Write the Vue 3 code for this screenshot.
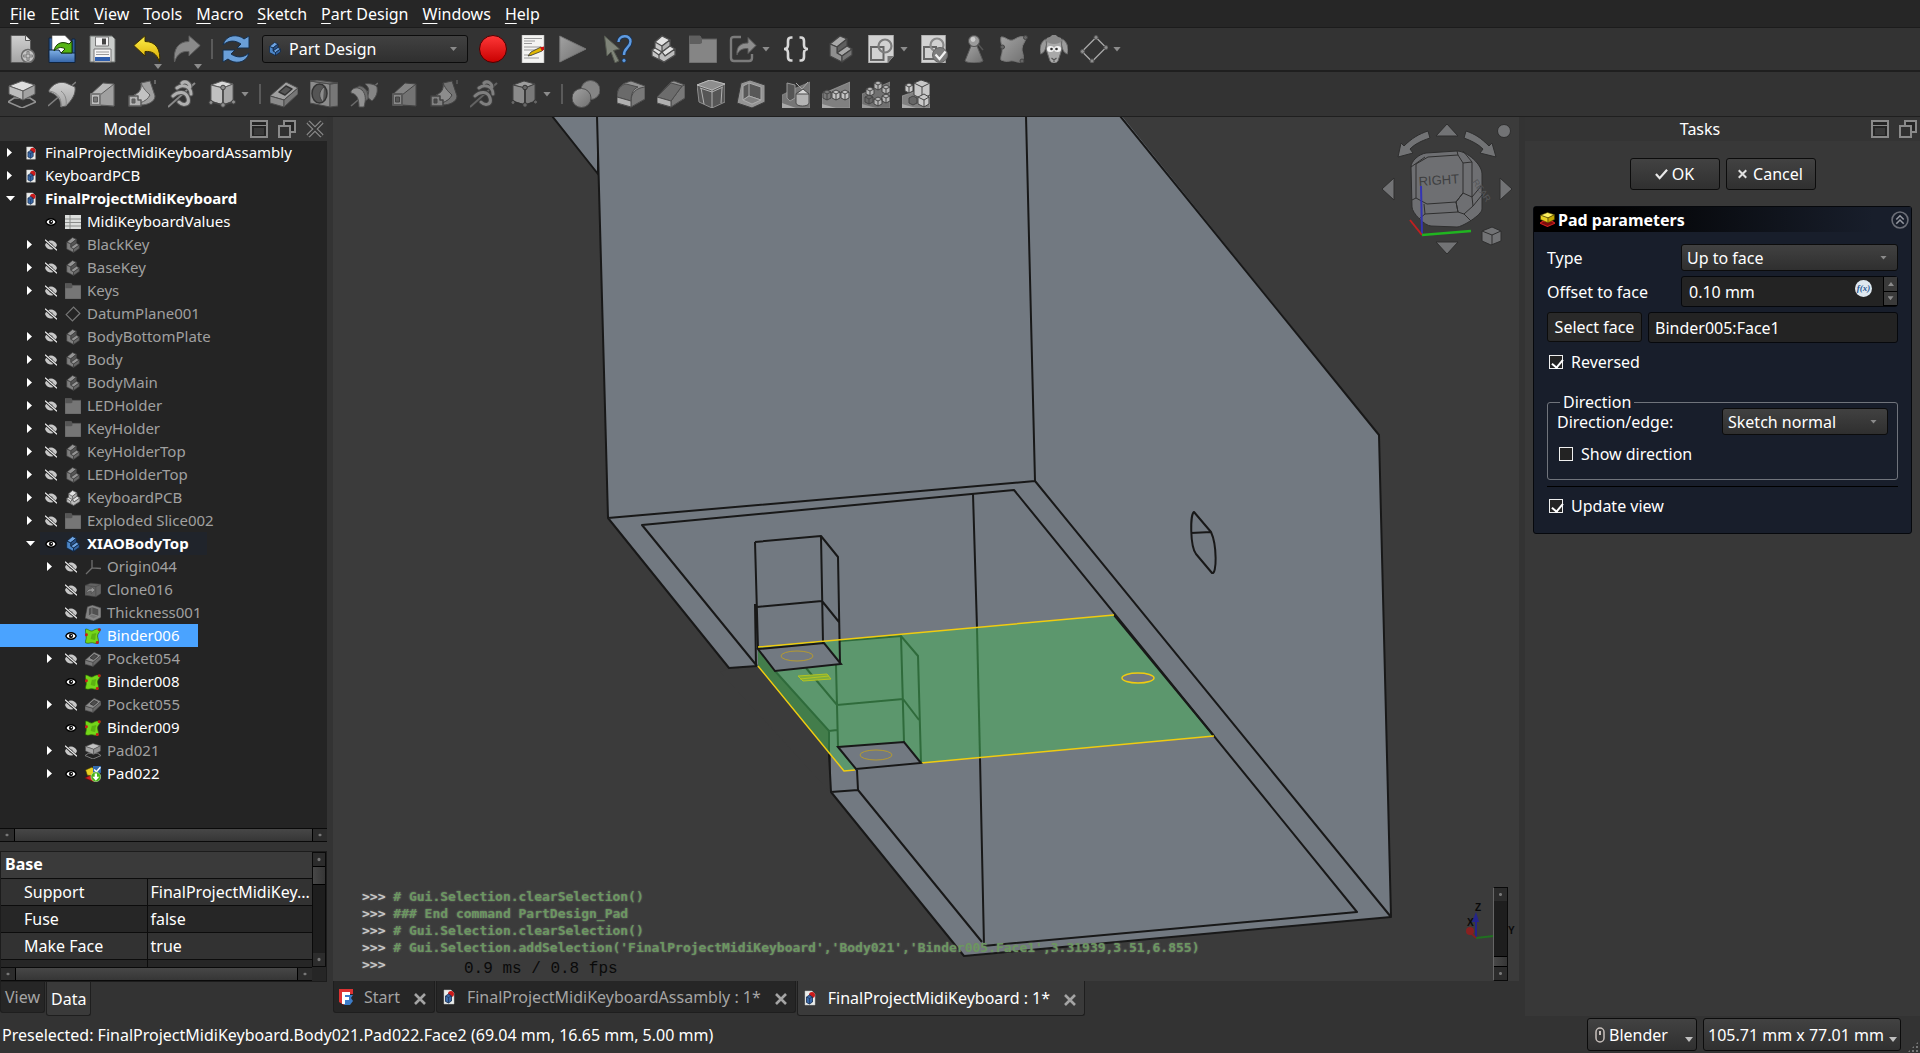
<script setup>
import { ref } from 'vue'

const menus = ['File', 'Edit', 'View', 'Tools', 'Macro', 'Sketch', 'Part Design', 'Windows', 'Help']

const fileTools = [
  { icon: 'new', label: 'New' },
  { icon: 'open', label: 'Open' },
  { icon: 'save', label: 'Save' },
  { gap: true },
  { icon: 'undo', label: 'Undo', corner: true },
  { icon: 'redo', label: 'Redo', corner: true },
  { sep: true },
  { icon: 'refresh', label: 'Refresh' },
  { gap: true }
]
const macroTools = [
  { gap: true },
  { icon: 'record', label: 'Record macro' },
  { icon: 'macros', label: 'Macros' },
  { icon: 'play', label: 'Execute macro' },
  { gap: true },
  { icon: 'whats', label: "What's this" },
  { gap: true },
  { icon: 'part', label: 'Create part' },
  { icon: 'folder', label: 'Create group' },
  { icon: 'share', label: 'Link actions', drop: true },
  { icon: 'braces', label: 'Variable set' },
  { gap: true },
  { icon: 'body', label: 'Create body' },
  { icon: 'sketch', label: 'Create sketch', drop: true },
  { icon: 'validate', label: 'Validate sketch' },
  { icon: 'pawn', label: 'Check geometry' },
  { icon: 'binderGray', label: 'Shape binder' },
  { icon: 'sheep', label: 'Clone' },
  { icon: 'datum', label: 'Datum plane', drop: true }
]
const designTools = [
  { icon: 'pad', label: 'Pad' },
  { icon: 'revolve', label: 'Revolution' },
  { icon: 'loft', label: 'Additive loft' },
  { icon: 'sweep', label: 'Additive pipe' },
  { icon: 'helix', label: 'Additive helix' },
  { icon: 'prim', label: 'Additive primitive', drop: true },
  { sep: true },
  { icon: 'pocket', label: 'Pocket' },
  { icon: 'hole', label: 'Hole' },
  { icon: 'groove', label: 'Groove' },
  { icon: 'loft', label: 'Subtractive loft', dark: true },
  { icon: 'sweep', label: 'Subtractive pipe', dark: true },
  { icon: 'helix', label: 'Subtractive helix', dark: true },
  { icon: 'prim', label: 'Subtractive primitive', drop: true, dark: true },
  { sep: true },
  { icon: 'boolean', label: 'Boolean' },
  { gap: true },
  { icon: 'fillet', label: 'Fillet' },
  { icon: 'chamfer', label: 'Chamfer' },
  { icon: 'draft', label: 'Draft' },
  { icon: 'thickness', label: 'Thickness' },
  { gap: true },
  { icon: 'mirror', label: 'Mirrored' },
  { icon: 'linear', label: 'Linear pattern' },
  { icon: 'polar', label: 'Polar pattern' },
  { icon: 'multi', label: 'Multi transform' }
]

const tree = [
  { t: 'FinalProjectMidiKeyboardAssambly', l: 0, a: 'c', i: 'doc', on: true },
  { t: 'KeyboardPCB', l: 0, a: 'c', i: 'doc', on: true },
  { t: 'FinalProjectMidiKeyboard', l: 0, a: 'o', i: 'doc', on: true, bold: true },
  { t: 'MidiKeyboardValues', l: 1, i: 'sheet', on: true },
  { t: 'BlackKey', l: 1, a: 'c', i: 'body' },
  { t: 'BaseKey', l: 1, a: 'c', i: 'body' },
  { t: 'Keys', l: 1, a: 'c', i: 'folder' },
  { t: 'DatumPlane001', l: 1, i: 'plane' },
  { t: 'BodyBottomPlate', l: 1, a: 'c', i: 'body' },
  { t: 'Body', l: 1, a: 'c', i: 'body' },
  { t: 'BodyMain', l: 1, a: 'c', i: 'body' },
  { t: 'LEDHolder', l: 1, a: 'c', i: 'folder' },
  { t: 'KeyHolder', l: 1, a: 'c', i: 'folder' },
  { t: 'KeyHolderTop', l: 1, a: 'c', i: 'body' },
  { t: 'LEDHolderTop', l: 1, a: 'c', i: 'body' },
  { t: 'KeyboardPCB', l: 1, a: 'c', i: 'part' },
  { t: 'Exploded Slice002', l: 1, a: 'c', i: 'folder' },
  { t: 'XIAOBodyTop', l: 1, a: 'o', i: 'bodyBlue', on: true, bold: true, active: true },
  { t: 'Origin044', l: 2, a: 'c', i: 'origin' },
  { t: 'Clone016', l: 2, i: 'clone' },
  { t: 'Thickness001', l: 2, i: 'thickness' },
  { t: 'Binder006', l: 2, i: 'binder', on: true, selected: true },
  { t: 'Pocket054', l: 2, a: 'c', i: 'pocket' },
  { t: 'Binder008', l: 2, i: 'binder', on: true },
  { t: 'Pocket055', l: 2, a: 'c', i: 'pocket' },
  { t: 'Binder009', l: 2, i: 'binder', on: true },
  { t: 'Pad021', l: 2, a: 'c', i: 'pad' },
  { t: 'Pad022', l: 2, a: 'c', i: 'padTip', on: true }
]

const props = [
  ['Support', 'FinalProjectMidiKey...'],
  ['Fuse', 'false'],
  ['Make Face', 'true']
]

const log = [
  '# Gui.Selection.clearSelection()',
  '### End command PartDesign_Pad',
  '# Gui.Selection.clearSelection()',
  "# Gui.Selection.addSelection('FinalProjectMidiKeyboard','Body021','Binder005.Face1',3.31939,3.51,6.855)",
  ''
]

const docs = [
  { t: 'Start', i: 'fc' },
  { t: 'FinalProjectMidiKeyboardAssambly : 1*', i: 'doc' },
  { t: 'FinalProjectMidiKeyboard : 1*', i: 'doc', current: true }
]

const offset = ref('0.10 mm')
const face = ref('Binder005:Face1')
const reversed = ref(true)
const showDirection = ref(false)
const updateView = ref(true)
</script>

<template>
  <div class="app">
    <svg class="defs" width="0" height="0" aria-hidden="true">
      <defs>
        <linearGradient id="gLight" x1="0" y1="0" x2="0" y2="1"><stop offset="0" stop-color="#d0d0d0" /><stop offset="1" stop-color="#a4a4a4" /></linearGradient>
        <linearGradient id="gMid" x1="0" y1="0" x2="1" y2="1"><stop offset="0" stop-color="#a2a2a2" /><stop offset="1" stop-color="#707070" /></linearGradient>
        <linearGradient id="gBlue" x1="0" y1="0" x2="0" y2="1"><stop offset="0" stop-color="#7fb0e6" /><stop offset="1" stop-color="#3565a8" /></linearGradient>
        <linearGradient id="gRed" x1="0" y1="0" x2="0" y2="1"><stop offset="0" stop-color="#ff3838" /><stop offset="1" stop-color="#c80000" /></linearGradient>
        <linearGradient id="gYellow" x1="0" y1="0" x2="0" y2="1"><stop offset="0" stop-color="#fdf04a" /><stop offset="1" stop-color="#d8a800" /></linearGradient>

        <symbol id="i-new" viewBox="0 0 28 28"><path d="M3 .5h14.500l5 5v22H3z" fill="url(#gLight)" stroke="#5a5a5a" /><path d="M17.500.5v5h5" fill="#eee" stroke="#5a5a5a" /><circle cx="20" cy="21" r="6.500" fill="#c4c4c4" stroke="#6a6a6a" stroke-width="1.500" /><path d="M20 16.500v9M15.500 21h9" stroke="#444" stroke-width="2.600" /><path d="M20 17v8M16 21h8" stroke="#eee" /></symbol>
        <symbol id="i-open" viewBox="0 0 28 28"><path d="M1 3h6v20H1z" fill="#2c5c9c" stroke="#10243e" /><path d="M4 .5h13l6 6V18H4z" fill="#fff" stroke="#555" stroke-width=".6" /><path d="M24 4h3v20h-3z" fill="#2c5c9c" stroke="#10243e" /><path d="M1 15h10l2 3h14v9.500H1z" fill="url(#gBlue)" stroke="#10243e" /><path d="M6 16c1-6 6-11 15-7l3-3v12H13l4-4c-4-3-8-1-11 2z" fill="#56b414" stroke="#173a05" /></symbol>
        <symbol id="i-save" viewBox="0 0 28 28"><path d="M2 1h22l3 3v23H2z" fill="#c9ccca" stroke="#6b6e6c" /><path d="M7.500 2h13v9h-13z" fill="#f4f4f4" stroke="#777" /><path d="M14 3.500h4v6h-4z" fill="#444" /><path d="M6 14h17v13H6z" fill="#f6f6f6" stroke="#777" /><path d="M8 17h13M8 19.500h13" stroke="#999" /><path d="M7 22h15v4H7z" fill="#2f5fae" /></symbol>
        <symbol id="i-undo" viewBox="0 0 28 28"><path d="M.8 10.500 12 .8v5.700c11 0 16 8 14.500 20.500-3-9-8-11-14.500-10.500V21z" fill="url(#gYellow)" stroke="#3c3000" stroke-linejoin="round" /></symbol>
        <symbol id="i-redo" viewBox="0 0 28 28"><path d="M27.200 10.500 16 .8v5.700C5 6.500 0 14.500 1.500 27c3-9 8-11 14.500-10.500V21z" fill="#8a8a8a" stroke="#5e5e5e" stroke-linejoin="round" /></symbol>
        <symbol id="i-refresh" viewBox="0 0 28 28"><g fill="#6a9fd8" stroke="#15304f" stroke-linejoin="round"><path d="M1 10C4-1 16-1 22 4l5-3v12H15l4-4C13 5 7 5 1 10z" /><path d="M27 18c-3 11-15 11-21 6l-5 3V15h12l-4 4c6 4 12 4 18-1z" /></g></symbol>
        <symbol id="i-record" viewBox="0 0 28 28"><circle cx="14" cy="14" r="13.500" fill="url(#gRed)" stroke="#4d0000" /></symbol>
        <symbol id="i-macros" viewBox="0 0 28 28"><path d="M3 0h22v28H3z" fill="#f4f4f2" stroke="#aaa" stroke-width=".6" /><path d="M5 3.500h18M5 6h11M5 8.500h8M5 12h17M5 15h14M5 20h8M5 23h15" stroke="#9a9a9a" /><path d="M9 21l3-4 10-5 3 2-2 2-10 4z" fill="#e0b800" stroke="#333" stroke-width=".8" /><path d="M21 12.500l4-1v3l-2 1.500z" fill="#d01010" /></symbol>
        <symbol id="i-play" viewBox="0 0 28 28"><path d="M.8 1 27 14 .8 27z" fill="url(#gMid)" stroke="#777" /></symbol>
        <symbol id="i-whats" viewBox="0 0 28 28"><path d="M.5 1l15 13-6 1.500L15 26l-4 1.800L7 17l-4 4z" fill="#7f8479" stroke="#555a50" /><path d="M14.500 7c0-7 12-8 12-.5 0 6-6.500 6-6.500 13.500" fill="none" stroke="#16345c" stroke-width="4" /><path d="M14.500 7c0-7 12-8 12-.5 0 6-6.500 6-6.500 13.500" fill="none" stroke="#5f9be0" stroke-width="2.400" /><circle cx="20" cy="25.500" r="2" fill="#5f9be0" stroke="#16345c" stroke-width=".7" /></symbol>
        <symbol id="i-part" viewBox="0 0 28 28"><g stroke="#4c4c4c" stroke-width="1.200" stroke-linejoin="round"><path d="M3 15l3-2V7l7-6 8 4v6l5 3v6l-11 7-12-6z" fill="#c6c6c6" /><path d="M6 7l7-6 8 4-8 6z" fill="#e2e2e2" /><path d="M13 11l8-6v6l-8 6z" fill="#b0b0b0" /><path d="M13 17l8-6 5 3-10 7z" fill="#e2e2e2" /><path d="M3 15l3-2 7 4-3 3z" fill="#e2e2e2" /><path d="M16 21l10-7v6l-11 7-5-3v-4l3-3z" fill="#bcbcbc" /></g></symbol>
        <symbol id="i-body" viewBox="0 0 28 28"><g stroke="#444" stroke-width="1.200" stroke-linejoin="round"><path d="M3 9l10-8 7 3-10 8z" fill="#a8a8a8" /><path d="M10 12l10-8v7l-10 7z" fill="#5e5e5e" /><path d="M10 18l10-7 5 3-10 7z" fill="#a8a8a8" /><path d="M3 9l7 3v6l5 3v6L3 21z" fill="#8f8f8f" /><path d="M15 21l10-7v6l-10 7z" fill="#747474" /></g></symbol>
        <symbol id="i-bodyBlue" viewBox="0 0 28 28"><g stroke="#0e2440" stroke-width="1.400" stroke-linejoin="round"><path d="M3 9l10-8 7 3-10 8z" fill="#6ea4e2" /><path d="M10 12l10-8v7l-10 7z" fill="#2a5288" /><path d="M10 18l10-7 5 3-10 7z" fill="#6ea4e2" /><path d="M3 9l7 3v6l5 3v6L3 21z" fill="#4c86c8" /><path d="M15 21l10-7v6l-10 7z" fill="#3566a4" /></g></symbol>
        <symbol id="i-folder" viewBox="0 0 28 28"><path d="M0 1h11l1.500 3H28v24H0z" fill="#858585" stroke="#5c5c5c" /><path d="M.5 1h11L13 4v4l-2 1H.5z" fill="#5f5f5f" /></symbol>
        <symbol id="i-share" viewBox="0 0 28 28"><path d="M12 2H5C3 2 2 3 2 5v18c0 2 1 3 3 3h15c2 0 3-1 3-3v-4" fill="none" stroke="#7b7b7b" stroke-width="2.400" /><path d="M8 20c-1-9 4-12 11-12V2.500l8 8-8 8v-5c-5 0-9 1-11 6.500z" fill="#8e8e8e" stroke="#5b5b5b" /></symbol>
        <symbol id="i-braces" viewBox="0 0 28 28"><path d="M10.500 2.500H9C6.500 2.500 6 4 6 6v4c0 2.500-1 4-4 4 3 0 4 1.500 4 4v4c0 2 .5 3.500 3 3.500h1.500M17.500 2.500H19c2.500 0 3 1.500 3 3.500v4c0 2.500 1 4 4 4-3 0-4 1.500-4 4v4c0 2-.5 3.500-3 3.500h-1.500" fill="none" stroke="#d8d8d8" stroke-width="2.600" /></symbol>
        <symbol id="i-sketch" viewBox="0 0 28 28"><path d="M1.500 0h25v21l-6 7h-19z" fill="#d2d2d2" stroke="#999" /><path d="M26.500 21l-6 7v-7z" fill="#777" /><path d="M4 12h12.500v13H4z" fill="none" stroke="#666" stroke-width="2" /><circle cx="18" cy="11" r="6.500" fill="none" stroke="#7c7c7c" stroke-width="2.200" /></symbol>
        <symbol id="i-validate" viewBox="0 0 28 28"><path d="M1.500 0h24v28h-24z" fill="#d2d2d2" stroke="#999" /><path d="M4 12h12v12H4z" fill="none" stroke="#666" stroke-width="2" /><circle cx="17" cy="10" r="6.500" fill="none" stroke="#8a8a8a" stroke-width="2.200" /><circle cx="20" cy="20" r="7.500" fill="#7d7d7d" stroke="#666" /><path d="M15.500 19.500l4 4.500 6-7.500" fill="none" stroke="#f2f2f2" stroke-width="2.200" /></symbol>
        <symbol id="i-pawn" viewBox="0 0 28 28"><path d="M11 11h6l6 15c-3 2.500-15 2.500-18 0z" fill="url(#gMid)" stroke="#5a5a5a" /><circle cx="14" cy="6" r="5.500" fill="#9b9b9b" stroke="#555" /><circle cx="13" cy="4.500" r="2.400" fill="#ccc" /><path d="M18 9l5 6" stroke="#555" stroke-width="1.500" /></symbol>
        <symbol id="i-binderGray" viewBox="0 0 28 28"><path d="M1 2c5-1 8 6 14 2 3-2 6-3 11-2 0 5-4 7-4 12 0 4 3 7 0 13-6 1-7-2-12-1-4 1-6 0-9-1-1-4 2-6 1-12 0-4-2-6-1-11z" fill="url(#gMid)" stroke="#777" /><g fill="#666" stroke="#444"><circle cx="25.500" cy="2.500" r="2" /><circle cx="2.500" cy="12" r="2" /><circle cx="22" cy="26" r="2" /></g></symbol>
        <symbol id="i-binder" viewBox="0 0 28 28"><path d="M1 2c5-1 8 6 14 2 3-2 6-3 12-2 0 5-5 7-5 12 0 4 3 8 1 13-6 1-8-2-13-1-4 1-6 1-9 0-1-4 2-6 1-12 0-4-2-7-1-12z" fill="#74d61a" stroke="#2c6404" stroke-width="1.200" /><path d="M12 10c4 1 6-2 8 0-3 5 0 8-3 11-3-1-5 0-7-2z" fill="#4d9a0c" opacity=".6" /><g fill="#c81c1c"><circle cx="25" cy="3" r="2.600" /><circle cx="2.500" cy="12" r="2.600" /><circle cx="21.500" cy="25.500" r="2.600" /></g></symbol>
        <symbol id="i-sheep" viewBox="0 0 28 28"><path d="M6 4C1 6-1 13 .5 19c4-1 5-5 6-9zM22 4c5 2 7 9 5.500 15-4-1-5-5-6-9z" fill="#9b9b9b" stroke="#666" /><path d="M7 5h14l1 9-4 12c-2 3-6 3-8 0L6 14z" fill="#a9a9a9" stroke="#666" /><path d="M6 6c0-5 4-3 5-5 2-2 4-2 6 0 1 2 5 0 5 5-4 4-12 4-16 0z" fill="#8a8a8a" /><ellipse cx="10.500" cy="14" rx="3.500" ry="3" fill="#f2f2f2" /><ellipse cx="17.500" cy="14" rx="3.500" ry="3" fill="#f2f2f2" /><circle cx="11.500" cy="14" r="1.300" fill="#333" /><circle cx="16.500" cy="14" r="1.300" fill="#333" /><path d="M11.500 23l2.500 2 2.500-2M14 25v2" fill="none" stroke="#555" stroke-width="1.200" /></symbol>
        <symbol id="i-datum" viewBox="0 0 28 28"><path d="M2 16.500 16 2.500l10 10-14 14z" fill="none" stroke="#a8a8a8" stroke-width="1.300" /><g fill="#8e8e8e" stroke="#555"><circle cx="2.500" cy="16.500" r="2" /><circle cx="16" cy="2.500" r="2" /><circle cx="26" cy="12.500" r="2" /><circle cx="12" cy="26" r="2" /></g></symbol>

        <symbol id="i-pad" viewBox="0 0 28 28"><path d="M0 22l6-4h16l6 4-14 6z" fill="none" stroke="#929292" stroke-width="1.600" /><g stroke="#5c5c5c" stroke-linejoin="round"><path d="M1 6 14 1l13 4-12 6z" fill="#dedede" /><path d="M1 6l14 5v9L1 14z" fill="#bcbcbc" /><path d="M15 11l12-6v9l-12 6z" fill="#a2a2a2" /></g></symbol>
        <symbol id="i-padYellow" viewBox="0 0 28 28"><path d="M0 21l6-4h16l6 4-14 6z" fill="#7c0c0c" stroke="#d02020" stroke-width="2" /><g stroke="#4c4000" stroke-linejoin="round"><path d="M1 6 14 1l13 4-12 6z" fill="#fdf060" /><path d="M1 6l14 5v9L1 14z" fill="#e8d020" /><path d="M15 11l12-6v9l-12 6z" fill="#c4a800" /></g></symbol>
        <symbol id="i-padTip" viewBox="0 0 28 28"><path d="M0 21l8-4h12v8l-6 2z" fill="#d02020" stroke="#6c0c0c" /><path d="M1 7l11-5 6 4v12L4 16z" fill="#e8d020" stroke="#4c4000" /><path d="M14 0h14v12H14z" fill="#3268ac" /><path d="M16 6l4 4 7-8" fill="none" stroke="#fff" stroke-width="2.600" /><circle cx="19" cy="19" r="8.500" fill="#48b414" stroke="#cfeec0" /><path d="M17 13h4v6h4l-6 7-6-7h4z" fill="#fff" /></symbol>
        <symbol id="i-revolve" viewBox="0 0 28 28"><path d="M0 26 28 2" stroke="#808080" stroke-width="1.600" /><path d="M1 10C5 4 11 1 18 3l9 4c1 7-3 13-9 19l-5 1C13 20 9 14 1 12z" fill="url(#gLight)" stroke="#5c5c5c" stroke-linejoin="round" /><path d="M1 11c9 1 13 8 12 16M18 26c1-7-1-12-5-15" fill="none" stroke="#888" /></symbol>
        <symbol id="i-loft" viewBox="0 0 28 28"><g stroke="#5c5c5c" stroke-linejoin="round"><path d="M3 14 15 3l11 1v22l-14-1z" fill="#b8b8b8" /><path d="M12 15 26 4v22l-14-1z" fill="#a0a0a0" /><path d="M3 14h9v11H3z" fill="#bdbdbd" stroke="#7a7a7a" stroke-width="2" /><path d="M5.500 17h4v5h-4z" fill="#777" /></g></symbol>
        <symbol id="i-sweep" viewBox="0 0 28 28"><g stroke="#5c5c5c" stroke-linejoin="round"><path d="M6 15c6-2 8-7 7-12l9-2 5 15c0 6-8 9-14 9H6z" fill="#a0a0a0" /><path d="M6 15c6-2 8-7 7-12 3 7 6 9 9 12-2 4-5 6-10 8z" fill="#c2c2c2" /><path d="M1 16h9v4h3v6H1z" fill="#b2b2b2" stroke-width="1.500" /><path d="M4 19h3v4H4z" fill="#666" /><path d="M27 4V0" stroke="#999" /></g></symbol>
        <symbol id="i-helix" viewBox="0 0 28 28"><path d="M0 27 27 3" stroke="#888" stroke-width="2" /><g fill="none" stroke-linecap="round"><path d="M5 16c5-5 13-5 15 2s-5 8-9 4M9 8c6-5 14-1 14 6M14 3c4-3 8 1 8 4" stroke="#555" stroke-width="5" /><path d="M5 16c5-5 13-5 15 2s-5 8-9 4M9 8c6-5 14-1 14 6M14 3c4-3 8 1 8 4" stroke="#b0b0b0" stroke-width="3" /></g></symbol>
        <symbol id="i-prim" viewBox="0 0 28 28"><g stroke="#5c5c5c" stroke-linejoin="round"><path d="M3 5 14 1l11 3-10 4z" fill="#dadada" /><path d="M3 5l12 3v17L3 21z" fill="#c0c0c0" /><path d="M15 8l10-4v17l-10 4z" fill="#a8a8a8" /></g><path d="M15 7v18M15 25 3 22M15 25l11-3" stroke="#444" stroke-width="1.500" /><g fill="#8e8e8e" stroke="#444"><circle cx="15" cy="7.500" r="2.300" /><circle cx="15" cy="25" r="2.300" /><circle cx="3" cy="22.500" r="2" /><circle cx="25.500" cy="22" r="2" /></g></symbol>
        <symbol id="i-pocket" viewBox="0 0 28 28"><g stroke="#4c4c4c" stroke-linejoin="round"><path d="M0 16 16 2l12 6-14 12z" fill="#a0a0a0" /><path d="M0 16l14 4v7L0 23z" fill="#8a8a8a" /><path d="M14 20 28 8v6L14 27z" fill="#767676" /><path d="M9 12l7-6 6 3-7 6z" fill="#555" stroke="#333" stroke-width="1.500" /></g></symbol>
        <symbol id="i-hole" viewBox="0 0 28 28"><path d="M0 1 20 4v23L0 23z" fill="#8c8c8c" stroke="#4c4c4c" /><path d="M20 4l8-1v23l-8 1zM0 1l20 3 8-1L7 0z" fill="#777" stroke="#4c4c4c" /><ellipse cx="9.500" cy="13.500" rx="7.500" ry="9.500" fill="#555" stroke="#333" stroke-width="1.500" /><path d="M14 7c-5 4-6 10-1 15" fill="#8d8d8d" stroke="#444" /></symbol>
        <symbol id="i-groove" viewBox="0 0 28 28"><path d="M1 26 28 3" stroke="#6a6a6a" stroke-width="1.600" /><g fill="#858585" stroke="#4c4c4c" stroke-linejoin="round"><path d="M15 4c3-1 10 0 12 3 1 6-1 10-5 14l-5-4c3-6 2-10-2-13z" /><path d="M9 6c5 0 10 5 9 13l-4 3c-1-7-3-11-9-13z" fill="#6c6c6c" /><path d="M1 11c3-4 7-4 11-1 4 4 4 10 2 17h-5C9 19 7 14 1 13z" fill="#929292" /></g></symbol>
        <symbol id="i-boolean" viewBox="0 0 28 28"><circle cx="18.500" cy="10" r="9.500" fill="#858585" stroke="#5c5c5c" /><circle cx="9.500" cy="18" r="9.500" fill="url(#gMid)" stroke="#4c4c4c" /></symbol>
        <symbol id="i-fillet" viewBox="0 0 28 28"><g stroke="#4c4c4c" stroke-linejoin="round"><path d="M0 23v-6C0 9 4 5 8 3l6-2 14 5v13L14 27z" fill="#949494" /><path d="M14 27v-6c0-8 5-13 14-14v12z" fill="#787878" /><path d="M0 17C0 9 4 5 9 4l12 3c-5 2-7 7-7 14z" fill="#6a6a6a" /><path d="M0 17l14 4v6L0 23z" fill="#b0b0b0" /></g></symbol>
        <symbol id="i-chamfer" viewBox="0 0 28 28"><g stroke="#4c4c4c" stroke-linejoin="round"><path d="M0 23v-6L14 2l3-1 11 4v13L14 27z" fill="#949494" /><path d="M14 27v-6L25 6l3-1v13z" fill="#787878" /><path d="M0 17 14 3l11 3-11 15z" fill="#6c6c6c" /><path d="M0 17l14 4v6L0 23z" fill="#b0b0b0" /></g></symbol>
        <symbol id="i-draft" viewBox="0 0 28 28"><path d="M0 5 13 0l15 4v18l-13 6L2 22z" fill="#565656" stroke="#8e8e8e" /><path d="M0 5 13 0l15 4-13 6z" fill="#8e8e8e" stroke="#bbb" /><path d="M3 8l12 4 11-5M15 10v18M4 8l3 16M25 8l-1 15" stroke="#b0b0b0" fill="none" /></symbol>
        <symbol id="i-thickness" viewBox="0 0 28 28"><g stroke="#3c3c3c" stroke-linejoin="round"><path d="M0 23 4 3l9-3 15 5v17l-13 6z" fill="#949494" /><path d="M6 20V6l6-3 12 4v13l-9 4z" fill="#585858" stroke="#aaa" /><path d="M12 3v13l12 4M12 16l-6 4" stroke="#aaa" fill="none" /><path d="M12 16l12 4-9 4-9-4z" fill="#808080" stroke="#aaa" /></g></symbol>
        <symbol id="i-mirror" viewBox="0 0 28 28"><path d="M0 28V15L14 8 28 2v26z" fill="#767676" stroke="#999" stroke-width=".6" /><path d="M5 3l8 2v13l-5 3-3-3z" fill="#555" stroke="#999" /><path d="M14 3l6 6 6-7" fill="none" stroke="#aaa" /><path d="M14 14c0-3 13-3 13 0v9c0 4-13 4-13 0z" fill="#b4b4b4" stroke="#4c4c4c" /><path d="M14 14l7-5 6 5z" fill="#d4d4d4" stroke="#4c4c4c" /><path d="M0 23l14 5H0z" fill="#aaa" /></symbol>
        <symbol id="i-linear" viewBox="0 0 28 28"><path d="M0 28V14L28 2v26z" fill="#808080" stroke="#aaa" stroke-width=".6" /><path d="M0 24l14 4H0z" fill="#aaa" /><g stroke="#444" fill="#c4c4c4"><path d="M1 12l4-2 4 2v6l-4 2-4-2z" fill="#777" /><path d="M10 12l4-2 4 2v6l-4 2-4-2zM19 12l4-2 4 2v6l-4 2-4-2z" /><path d="M1 12l4 2 4-2M5 14v6M10 12l4 2 4-2M14 14v6M19 12l4 2 4-2M23 14v6" fill="none" /></g></symbol>
        <symbol id="i-polar" viewBox="0 0 28 28"><path d="M0 28V14L28 2v26z" fill="#707070" stroke="#999" stroke-width=".6" /><path d="M0 24l14 4H0z" fill="#999" /><g stroke="#444" fill="#b4b4b4"><path d="M12 3l4-2 4 2v5l-4 2-4-2zM20 7l4-2 4 2v5l-4 2-4-2zM20 16l4-2 4 2v5l-4 2-4-2zM12 19l4-2 4 2v5l-4 2-4-2z" /><path d="M4 9l4-2 4 2v5l-4 2-4-2z" /><path d="M3 17l4-2 4 2v5l-4 2-4-2z" fill="#666" /><path d="M12 3l4 2 4-2M16 5v5M20 7l4 2 4-2M24 9v5M20 16l4 2 4-2M24 18v5M12 19l4 2 4-2M16 21v5M4 9l4 2 4-2M8 11v5M3 17l4 2 4-2M7 19v5" fill="none" /></g></symbol>
        <symbol id="i-multi" viewBox="0 0 28 28"><path d="M0 28V16L28 6v22z" fill="#808080" stroke="#aaa" stroke-width=".6" /><path d="M0 24l14 4H0z" fill="#aaa" /><g stroke="#444" fill="#c8c8c8"><path d="M12 3l7-3 9 3v12l-8 4-8-4z" /><path d="M12 3l8 4 8-4M20 7v12" fill="none" /><path d="M3 5l4-2 4 2v6l-4 2-4-2z" /><path d="M3 5l4 2 4-2M7 7v6" fill="none" /><path d="M7 18l4-2 4 2v5l-4 2-4-2z" fill="#666" /><path d="M16 17l6-3 5 3v7l-5 3-6-3z" /><path d="M16 17l6 3 5-3M22 20v7" fill="none" /></g></symbol>

        <symbol id="i-doc" viewBox="0 0 16 16"><path d="M3 1h7l3 3v11H3z" fill="#eceeec" stroke="#bbb" stroke-width=".5" /><circle cx="10" cy="5" r="3" fill="#cc1a1a" /><path d="M4.500 7l3-2 3 2v5l-3 2-3-1.500z" fill="#3a68a8" stroke="#152c4c" stroke-width=".8" /><path d="M4.500 7l3 1.500 3-1.500M7.500 8.500V14" fill="none" stroke="#152c4c" stroke-width=".6" /></symbol>
        <symbol id="i-sheet" viewBox="0 0 16 16"><path d="M0 1h16v14H0z" fill="#dcdedc" /><path d="M0 5h16M0 8.500h16M0 12h16M5 1v14" stroke="#8a8c8a" /></symbol>
        <symbol id="i-plane" viewBox="0 0 28 28"><path d="M2 15 15 2l11 11-13 13z" fill="none" stroke="#858585" stroke-width="2.200" /></symbol>
        <symbol id="i-origin" viewBox="0 0 16 16"><path d="M7 1v8l9 .5M7 9l-6 6" fill="none" stroke="#7c7c7c" stroke-width="1.300" /></symbol>
        <symbol id="i-clone" viewBox="0 0 28 28"><path d="M0 6 10 2l18 2v16l-9 6-19-3z" fill="#6f6f6f" stroke="#4a4a4a" /><path d="M19 8l9-4M19 8v18M0 6l19 2" stroke="#4a4a4a" fill="none" /><path d="M3 20c0-6 3-8 8-8V8l7 6-7 6v-4c-4 0-6 1-8 4z" fill="#a8a8a8" stroke="#444" /></symbol>
        <symbol id="i-fc" viewBox="0 0 16 16"><path d="M1 0h14v5H6v11L1 13z" fill="#dc3232" /><path d="M7 6h8l-2 3 2 3-3 4H6z" fill="#3c7cc8" /><path d="M4 3h8v3H7v2h4v3H7v4H4z" fill="#fff" /></symbol>
        <symbol id="i-eye" viewBox="0 0 14 10"><path d="M1 5c2-5 10-5 12 0-2 5-10 5-12 0z" fill="#fff" stroke="#000" stroke-width="1.600" /><circle cx="7" cy="5" r="2.500" fill="#111" /><circle cx="7.500" cy="4.500" r=".8" fill="#fff" /></symbol>
        <symbol id="i-eyeOff" viewBox="1 0 12 12"><path d="M1 6c2-6 10-6 12 0-2 6-10 6-12 0z" fill="#c8c8c8" /><circle cx="7" cy="6" r="2" fill="#8c8c8c" /><path d="M1 1l12 10.500" stroke="#242424" stroke-width="2.600" /><path d="M1 .8l12 10.400" stroke="#f0f0f0" stroke-width="1.200" /></symbol>
        <symbol id="i-dockMin" viewBox="0 0 18 18"><path d="M1 1h16v16H1z" fill="#242424" stroke="#8a8a8a" stroke-width="2" /><path d="M2 5.500h14" stroke="#8a8a8a" /><path d="M4 8h10v7H4z" fill="#383838" /></symbol>
        <symbol id="i-dockFloat" viewBox="0 0 18 18"><path d="M6 1h11v11H6z" fill="#242424" stroke="#8a8a8a" stroke-width="2" /><path d="M1 6h11v11H1z" fill="#303030" stroke="#8a8a8a" stroke-width="2" /></symbol>
        <symbol id="i-dockClose" viewBox="0 0 18 18"><path d="M2 2l14 14M16 2 2 16" stroke="#8a8a8a" stroke-width="4.500" /><path d="M2 2l14 14M16 2 2 16" stroke="#333" stroke-width="2" /></symbol>
        <symbol id="i-close" viewBox="0 0 12 12"><path d="M1 1l10 10M11 1 1 11" stroke="#a4a4a4" stroke-width="2.600" /></symbol>
        <symbol id="i-cross" viewBox="0 0 12 12"><path d="M1 1l10 10M11 1 1 11" stroke="#e0e0e0" stroke-width="2.800" /></symbol>
        <symbol id="i-check" viewBox="0 0 14 12"><path d="M1 6l4 4.500L13 1.500" fill="none" stroke="#e8e8e8" stroke-width="2.400" /></symbol>
      </defs>
    </svg>

    <nav class="menubar">
      <button v-for="m in menus" :key="m" type="button"><u>{{ m[0] }}</u>{{ m.slice(1) }}</button>
    </nav>

    <div class="toolbar">
      <template v-for="(b, n) in fileTools" :key="'f' + n">
        <span v-if="b.gap" class="tgap"></span>
        <span v-else-if="b.sep" class="tsep"></span>
        <button v-else type="button" class="tool" :aria-label="b.label">
          <svg><use :href="'#i-' + b.icon" /></svg>
          <i v-if="b.corner" class="tri corner"></i>
        </button>
      </template>
      <label class="workbench">
        <svg><use href="#i-bodyBlue" /></svg>
        <select class="combo" aria-label="Workbench"><option>Part Design</option></select>
      </label>
      <template v-for="(b, n) in macroTools" :key="'m' + n">
        <span v-if="b.gap" class="tgap"></span>
        <button v-else type="button" class="tool" :class="{ drop: b.drop }" :aria-label="b.label">
          <svg><use :href="'#i-' + b.icon" /></svg>
          <i v-if="b.drop" class="tri"></i>
        </button>
      </template>
    </div>

    <div class="toolbar second">
      <template v-for="(b, n) in designTools" :key="'d' + n">
        <span v-if="b.gap" class="tgap"></span>
        <span v-else-if="b.sep" class="tsep"></span>
        <button v-else type="button" class="tool" :class="{ drop: b.drop, dark: b.dark }" :aria-label="b.label">
          <svg><use :href="'#i-' + b.icon" /></svg>
          <i v-if="b.drop" class="tri"></i>
        </button>
      </template>
    </div>

    <main class="work">
      <aside class="model">
        <header class="dockhead">
          <h2>Model</h2>
          <button type="button" aria-label="Minimize"><svg><use href="#i-dockMin" /></svg></button>
          <button type="button" aria-label="Float"><svg><use href="#i-dockFloat" /></svg></button>
          <button type="button" aria-label="Close"><svg><use href="#i-dockClose" /></svg></button>
        </header>
        <ul class="tree">
          <li v-for="(r, n) in tree" :key="n" :class="['lv' + r.l, { on: r.on, bold: r.bold, selected: r.selected, active: r.active }]">
            <span class="arrow" :class="r.a"></span>
            <span class="item">
              <svg v-if="r.l" class="eye"><use :href="r.on ? '#i-eye' : '#i-eyeOff'" /></svg>
              <svg class="ico" :class="{ faded: !r.on && r.i !== 'part' }"><use :href="'#i-' + r.i" /></svg>
              <span class="name">{{ r.t }}</span>
            </span>
          </li>
        </ul>
        <div class="hbar"><i></i><b></b><i></i></div>
        <section class="props">
          <div class="sheet">
            <table>
              <colgroup><col class="key" /><col /></colgroup>
              <thead><tr><th colspan="2">Base</th></tr></thead>
              <tbody>
                <tr v-for="p in props" :key="p[0]"><td>{{ p[0] }}</td><td>{{ p[1] }}</td></tr>
                <tr class="cut"><td></td><td></td></tr>
              </tbody>
            </table>
            <div class="hbar"><i></i><b></b><i></i></div>
          </div>
          <div class="vbar"><i></i><b></b><span></span><i></i></div>
        </section>
        <div class="proptabs">
          <button type="button">View</button>
          <button type="button" class="current">Data</button>
        </div>
      </aside>

      <section class="center">
        <div class="view">
          <svg class="scene" viewBox="333 117 1186 864" preserveAspectRatio="xMidYMid slice">
            <path d="M552 116l46 58V116z" fill="#727981" stroke="#181818" stroke-width="2" />
            <path d="M597 116l11 402 121 150 28-2 74 65v61l133 164 427-39-12-482-258-320z" fill="#727981" />
            <path d="M729 669l28-3 73 87v39l-110-120z" fill="#3b3b3b" />
            <path d="M758 647l356-32 100 121-293 27-65 6-12 2-86-105z" fill="#5c976d" />
            <path d="M758 649l17 22 54 60v22l-71-87z" fill="#437d4b" />
            <g fill="none" stroke="#2f6b3b" stroke-width="2">
              <path d="M840 641l61-5 17 20 3 107M901 636l3 106M836 665l2 82M806 668l31 37 66-6 16 21M837 730l-8 1-54-60M829 731v22" />
              <path d="M977 628l3 130" />
            </g>
            <g fill="none" stroke="#181818" stroke-width="2" stroke-linejoin="round">
              <path d="M597 116l11 402 427-37-9-365M1120 116l259 319 12 482-356-436M608 518l121 150 28-2M757 666 642 525l372-35 343 422-374 34M1391 917l-427 39-133-164 27-2M858 790l124 152M829 754l2 38M857 770l1 20" />
              <path d="M973 494l4 134M980 758l4 187" />
              <path d="M755 542l66-6 17 21 2 107M821 536l2 107M755 542l3 107M757 607l65-6 17 21M755 604l1 62" />
              <path d="M1114 615l100 121" />
              <path d="M1194 512c-4 2-4 34 2 42l16 19c5 2 5-28-1-41zM1191 533l20-1" />
            </g>
            <g fill="none" stroke="#f0cc10" stroke-width="1.500">
              <path d="M758 647l356-32M1214 736l-293 27M758 666l86 105 11-1" />
            </g>
            <g fill="#727981" stroke="#181818" stroke-width="2"><path d="M758 649l66-6 17 21-66 7zM838 747l66-5 17 21-65 6z" /></g>
            <g fill="none" stroke="#b49a30" stroke-width="1"><ellipse cx="797" cy="656" rx="16" ry="5" /><ellipse cx="876" cy="755" rx="16" ry="5" /></g>
            <ellipse cx="1138" cy="678" rx="16" ry="5" fill="#727981" stroke="#f0cc10" stroke-width="1.500" />
            <path d="M798 676l29-2 4 5-28 2z" fill="#7eae3c" stroke="#b4c420" />
            <path d="M800 679l29-3" stroke="#b4c420" />

            <g fill="#727375" stroke="#2e2e2e" stroke-linejoin="round">
              <path d="M1447 124l-11 12h22zM1447 254l-11-12h22zM1382 189l12-11v22zM1512 189l-12-11v22z" />
              <path d="M1428 131l2 7c-9 3-15 6-20 11l3 4-15 4 3-14 3 3c8-8 15-12 24-15zM1466 131l-2 7c8 3 14 6 19 11l-3 4 16 4-4-14-3 3c-8-8-14-12-23-15z" />
              <circle cx="1504" cy="131" r="6.500" />
              <path d="M1482 231l10-4 9 4v10l-10 4-9-4z" /><path d="M1482 231l10 4 9-4M1492 235v10" fill="none" />
              <path d="M1411 167c0-6 8-13 15-14l31-2c10 0 26 14 25 24v34c0 6-20 18-25 18l-26-1c-6 0-19-13-19-19z" fill="#6e6f72" />
              <path d="M1416 164l12-7 30-2 5 8v30l-7 9-29 2-11-6zM1411 167l14-10M1416 198l-4 2M1424 204l1 10 33-2-2-10M1457 151l1 4M1463 163l9-1v35l10-12M1472 162l-9-11M1456 202l7-9 9 4 1 9-9 8-6-2zM1473 206l9-11M1464 214l7 7M1425 214l-6 5" fill="none" />
            </g>
            <text class="right" x="1419" y="186" transform="rotate(-4 1419 186)">RIGHT</text>
            <text class="rear" x="1472" y="182" transform="rotate(55 1472 182)">REAR</text>
            <path d="M1421 186l1 49" stroke="#3434b4" stroke-width="2" /><path d="M1422 235l-12-15" stroke="#c02020" stroke-width="2" /><path d="M1422 235l49-4" stroke="#20b420" stroke-width="2.500" />

            <path d="M1476 937v-20" stroke="#24248c" stroke-width="2" /><path d="M1476 912l-4 10h7z" fill="#24248c" /><path d="M1476 938l18-2" stroke="#207020" stroke-width="2" /><path d="M1476 938l-6-6" stroke="#802020" stroke-width="2" /><circle cx="1470" cy="931" r="4" fill="#882020" />
            <g class="axes"><text x="1475" y="911">Z</text><text x="1467" y="926">X</text><text x="1508" y="934">Y</text></g>
          </svg>
          <div class="console">
            <p v-for="(l, n) in log" :key="n"><span>&gt;&gt;&gt;</span> {{ l }}</p>
          </div>
          <p class="fps">0.9 ms / 0.8 fps</p>
          <div class="vbar over"><i></i><span></span><b></b><i></i></div>
        </div>
        <div class="doctabs">
          <div v-for="d in docs" :key="d.t" class="doctab" :class="{ current: d.current }">
            <svg class="ico"><use :href="'#i-' + d.i" /></svg>
            <button type="button">{{ d.t }}</button>
            <button type="button" class="x" aria-label="Close tab"><svg><use href="#i-close" /></svg></button>
          </div>
        </div>
      </section>

      <aside class="tasks">
        <header class="dockhead">
          <h2>Tasks</h2>
          <button type="button" aria-label="Minimize"><svg><use href="#i-dockMin" /></svg></button>
          <button type="button" aria-label="Float"><svg><use href="#i-dockFloat" /></svg></button>
        </header>
        <div class="taskbody">
          <div class="actions">
            <button type="button" class="btn"><svg><use href="#i-check" /></svg>OK</button>
            <button type="button" class="btn cancel"><svg><use href="#i-cross" /></svg>Cancel</button>
          </div>
          <section class="panel">
            <header>
              <svg class="pico"><use href="#i-padYellow" /></svg>
              <h3>Pad parameters</h3>
              <svg class="fold" viewBox="0 0 17 17"><circle cx="8.500" cy="8.500" r="7.500" fill="none" stroke="#6c6f78" stroke-width="1.500" /><path d="M5 8l3.500-3.500L12 8M5 12l3.500-3.500L12 12" fill="none" stroke="#9497a0" stroke-width="1.500" /></svg>
            </header>
            <form class="form" @submit.prevent>
              <div class="row">
                <label for="type">Type</label>
                <select id="type" class="combo"><option>Up to face</option></select>
              </div>
              <div class="row spinrow">
                <label for="offset">Offset to face</label>
                <div class="spin">
                  <input id="offset" v-model="offset" type="text" />
                  <span class="fx">f(x)</span>
                  <div class="steps"><button type="button" aria-label="Increase"><i class="tri up"></i></button><button type="button" aria-label="Decrease"><i class="tri"></i></button></div>
                </div>
              </div>
              <div class="facerow">
                <button type="button" class="btn">Select face</button>
                <input v-model="face" type="text" aria-label="Face" />
              </div>
              <label class="tick"><input v-model="reversed" type="checkbox" />Reversed</label>
              <fieldset>
                <legend>Direction</legend>
                <div class="row">
                  <label for="edge">Direction/edge:</label>
                  <select id="edge" class="combo"><option>Sketch normal</option></select>
                </div>
                <label class="tick"><input v-model="showDirection" type="checkbox" />Show direction</label>
              </fieldset>
              <hr />
              <label class="tick last"><input v-model="updateView" type="checkbox" />Update view</label>
            </form>
          </section>
        </div>
      </aside>
    </main>

    <footer class="status">
      <p>Preselected: FinalProjectMidiKeyboard.Body021.Pad022.Face2 (69.04 mm, 16.65 mm, 5.00 mm)</p>
      <button type="button" class="btn nav"><svg class="mouse" viewBox="0 0 10 16"><rect x="1" y="1" width="8" height="14" rx="4" fill="none" stroke="#c8c0bc" stroke-width="1.500" /><path d="M5 4v4" stroke="#c8c0bc" stroke-width="2" /></svg>Blender<i class="tri"></i></button>
      <button type="button" class="btn dims">105.71 mm x 77.01 mm<i class="tri"></i></button>
      <span class="grip"></span>
    </footer>
  </div>
</template>

<style>
html, body { margin: 0; background: #333; }
</style>

<style scoped>
.app { display: flex; flex-direction: column; height: 100vh; overflow: hidden; background: #333; color: #fff; font: 16px/22px "Noto Sans", sans-serif; }
.app * { box-sizing: border-box; }
.defs { position: absolute; }
button, input, select { font: inherit; color: inherit; margin: 0; padding: 0; border: 0; background: none; }
h2, h3, p, ul { margin: 0; padding: 0; font-weight: normal; font-size: 16px; }
svg { display: block; flex: none; }

.menubar { display: flex; flex: none; height: 28px; padding: 0 3px; background: #262626; border-bottom: 1px solid #1c1c1c; }
.menubar button { padding: 0 7px; line-height: 28px; }
.menubar button + button { padding-left: 8px; }
.menubar button:nth-child(n + 4) { padding-left: 7px; }
.menubar u { text-underline-offset: 3px; text-decoration-thickness: 1px; }
.toolbar { display: flex; flex: none; align-items: center; height: 44px; padding: 0 2px; background: #333; border-bottom: 2px solid #1f1f1f; }
.toolbar.second { height: 45px; border-bottom-width: 1px; }
.tool { position: relative; display: flex; align-items: center; width: 40px; height: 40px; padding: 0 6px; }
.tool.drop { width: 53px; }
.tool svg { width: 28px; height: 28px; }
.tool.dark svg { filter: brightness(.72); }
.tri { flex: none; width: 8px; height: 5px; background: #8c8c8c; clip-path: polygon(0 0, 100% 0, 50% 100%); }
.tri.up { transform: rotate(180deg); }
.tool.drop .tri { margin-left: 5px; }
.tri.corner { position: absolute; right: 5px; bottom: 0; }
.tgap { width: 5px; }
.tsep { width: 9px; height: 20px; border-left: 2px solid #5a5a5a; margin: 0 -4px 0 4px; }
.workbench { position: relative; display: flex; align-items: center; margin-left: 1px; }
.workbench svg { position: absolute; left: 6px; width: 14px; height: 16px; }
.combo { appearance: none; height: 27px; border: 1px solid #0c0c0c; border-radius: 3px; padding-left: 5px; background: linear-gradient(#414141, #2f2f2f); color: #fff; }
.workbench .combo { width: 206px; height: 28px; padding-left: 26px; }
.workbench::after, .row:has(> .combo)::after { content: ""; position: absolute; right: 11px; top: 50%; width: 7px; height: 4px; margin-top: -2px; background: #8a8a8a; clip-path: polygon(0 0, 100% 0, 50% 100%); }

.work { display: flex; flex: 1; min-height: 0; }
.model { display: flex; flex-direction: column; width: 327px; margin-right: 6px; flex: none; }
.dockhead { display: flex; align-items: center; flex: none; height: 24px; padding: 0 3px 0 0; gap: 10px; background: #343434; }
.dockhead h2 { flex: 1; padding-left: 14px; text-align: center; }
.dockhead svg { width: 18px; height: 18px; }
.tree { flex: 1; min-height: 0; overflow: hidden; list-style: none; background: #242424; color: #a0a0a0; font-size: 15px; }
.tree li { display: flex; align-items: center; width: max-content; height: 23px; font-size: 15px; line-height: 23px; }
.lv1 { padding-left: 20px; }
.lv2 { padding-left: 40px; }
.arrow { width: 24px; height: 9px; flex: none; }
.arrow.c::before { content: ""; display: block; width: 5px; height: 9px; margin-left: 7px; background: #fff; clip-path: polygon(0 0, 100% 50%, 0 100%); }
.arrow.o::before { content: ""; display: block; width: 9px; height: 5px; margin: 2px 0 0 6px; background: #fff; clip-path: polygon(0 0, 100% 0, 50% 100%); }
.item { display: flex; align-items: center; height: 23px; }
.eye { width: 12px; height: 12px; margin-right: 8px; }
.ico { width: 16px; height: 16px; }
.item .ico { margin-right: 6px; }
.lv0 .ico { width: 14px; margin-right: 7px; }
.lv1 .arrow, .lv2 .arrow { width: 20px; }
.lv1 .item, .lv2 .item { padding: 0 18px 0 5px; }
.faded { opacity: .85; }
.on { color: #fff; }
.bold { font-weight: bold; }
.active .item { background: #20242b; }
.tree li.selected { background: #4aa3ff; }

.hbar { display: flex; flex: none; height: 14px; background: #1e1e1e; border: 1px solid #0a0a0a; border-width: 1px 0; }
.hbar i, .vbar i { flex: none; width: 14px; background: radial-gradient(#777 1px, #2c2c2c 2px); }
.hbar b { flex: 1; background: linear-gradient(#474747, #363636); border: 1px solid #000; border-width: 0 1px; }
.vbar { display: flex; flex-direction: column; flex: none; width: 14px; background: #1e1e1e; border: 1px solid #0a0a0a; }
.vbar i { width: auto; height: 13px; }
.vbar b { height: 19px; background: linear-gradient(90deg, #474747, #363636); border: 1px solid #000; border-width: 1px 0; }
.vbar span { flex: 1; }
.props { display: flex; flex: none; align-items: flex-start; height: 131px; margin-top: 9px; border: 1px solid #1c1c1c; background: #262626; }
.props .vbar { height: 115px; }
.sheet { flex: 1; min-width: 0; }
.sheet table { width: 100%; table-layout: fixed; border-collapse: collapse; }
.key { width: 146px; }
.sheet th { height: 26px; padding: 0 4px; text-align: left; background: #3a3a3a; border-bottom: 1px solid #0c0c0c; line-height: 25px; }
.sheet td { height: 27px; padding: 0 4px; border-bottom: 1px solid #0c0c0c; line-height: 26px; white-space: nowrap; }
.sheet td:first-child { padding-left: 23px; border-right: 1px solid #0c0c0c; }
.sheet td + td { padding: 0 3px; }
.sheet tbody tr:nth-child(odd) { background: #323232; }
.sheet tbody tr.cut { background: #262626; }
.sheet .cut td { height: 8px; border-bottom: 0; padding: 0; }
.proptabs { display: flex; align-items: flex-start; gap: 1px; flex: none; height: 34px; }
.proptabs button { height: 31px; padding: 0 4px; background: #262626; border: 1px solid #1e1e1e; border-top: 0; border-radius: 0 0 3px 3px; color: #a4a4a4; }
.proptabs .current { height: 34px; background: #3a3a3a; color: #fff; }

.center { display: flex; flex-direction: column; flex: 1; min-width: 0; }
.view { position: relative; flex: 1; min-height: 0; background: #3b3b3b; }
.scene { position: absolute; inset: 0; width: 100%; height: 100%; }
.right { font: 13px "Liberation Sans", sans-serif; fill: #3e3f41; }
.rear { font: 9px "Liberation Sans", sans-serif; fill: #56575a; }
.axes text { font: bold 10px "Liberation Sans", sans-serif; fill: #0a0a0a; }
.console { position: absolute; left: 29px; bottom: 8px; font: bold 13px/17px "DejaVu Sans Mono", monospace; color: #6b9760; text-shadow: 0 0 2px #777; white-space: pre; }
.console p { font: inherit; }
.console span { color: #c8c8c8; }
.fps { position: absolute; left: 131px; bottom: 2px; font: 16px/20px "Liberation Mono", monospace; color: #0a0a0a; }
.over { position: absolute; right: 11px; bottom: 0; width: 15px; height: 94px; border-left: 1px solid #666; }
.over b { height: 11px; }
.doctabs { display: flex; align-items: flex-start; flex: none; height: 35px; }
.doctab { display: flex; align-items: center; height: 32px; margin-right: 1px; padding: 0 8px 0 4px; background: #262626; border: 1px solid #1e1e1e; border-top: 0; border-radius: 0 0 3px 3px; color: #a4a4a4; }
.doctab button:not(.x) { margin: 0 14px 0 10px; }
.doctab.current { height: 35px; background: #3a3a3a; color: #fff; }
.x { padding-top: 4px; }
.x svg { width: 12px; height: 12px; }

.tasks { display: flex; flex-direction: column; flex: none; width: 395px; margin-left: 6px; }
.taskbody { flex: 1; background: #383838; padding: 17px 8px 0; }
.actions { display: flex; justify-content: center; gap: 6px; }
.btn { display: flex; align-items: center; justify-content: center; gap: 4px; height: 32px; border: 1px solid #0c0c0c; border-radius: 3px; background: linear-gradient(#424242, #303030); }
.actions .btn { width: 90px; }
.btn svg { width: 13px; height: 12px; }
.cancel svg { width: 9px; height: 10px; margin-right: 2px; }
.panel { margin-top: 16px; border: 1px solid #06080c; border-radius: 3px; background: #181e2b; }
.panel header { display: flex; align-items: center; height: 25px; padding: 0 2px 0 6px; background: linear-gradient(90deg, #000 15%, #181e2b 90%); }
.panel h3 { flex: 1; margin-left: 3px; font-weight: bold; }
.pico { width: 15px; height: 15px; }
.fold { width: 18px; height: 18px; }
.form { padding: 12px 13px 16px; }
.row { position: relative; display: flex; align-items: center; }
.row label { flex: 1; }
.row .combo { width: 217px; }
.spinrow { margin: 5px 0; }
.spin { position: relative; display: flex; width: 217px; height: 31px; border: 1px solid #06080c; border-radius: 3px; background: #232323; }
.spin input { flex: 1; min-width: 0; padding-left: 7px; }
.fx { position: absolute; right: 25px; top: 3px; width: 17px; height: 17px; border-radius: 9px; background: #dfe8f0; color: #2c5a94; font: italic bold 9px/16px "Liberation Serif", serif; text-align: center; }
.steps { display: flex; flex-direction: column; width: 14px; border-left: 1px solid #000; }
.steps button { display: flex; flex: 1; align-items: center; justify-content: center; background: #3a3a3a; border-bottom: 1px solid #000; }
.steps .tri { width: 6px; height: 4px; }
.facerow { display: flex; gap: 6px; height: 31px; }
.facerow .btn { width: 95px; height: 30px; background: #292929; }
.facerow input { flex: 1; min-width: 0; padding-left: 6px; border: 1px solid #06080c; border-radius: 3px; background: #232323; }
.tick { display: flex; align-items: center; height: 22px; margin: 8px 0 0 2px; }
.tick input { appearance: none; position: relative; width: 14px; height: 14px; margin-right: 8px; border: 1px solid #f0f0f0; background: #232323; }
.tick input:checked::after { content: ""; position: absolute; left: 4px; top: 1px; width: 5px; height: 9px; border: solid #fff; border-width: 0 2px 2px 0; transform: rotate(40deg); }
fieldset { min-width: 0; margin: 18px 0 0; padding: 0 9px 14px; border: 1px solid #70747c; border-radius: 3px; }
legend { margin-left: 3px; padding: 0 3px; line-height: 22px; }
fieldset .row { margin-top: -5px; }
fieldset .row .combo { width: 166px; }
hr { height: 1px; margin: 6px 0 0; border: 0; background: #000; }
.tick.last { margin-top: 8px; }

.status { display: flex; align-items: center; flex: none; height: 37px; padding: 0 1px 0 2px; }
.status p { flex: 1; }
.status .btn { height: 33px; margin-right: 6px; padding: 0 3px; }
.nav { width: 110px; }
.btn .mouse { width: 10px; height: 16px; }
.status .tri { align-self: flex-end; margin-bottom: 8px; margin-left: auto; background: #c0c0c0; }
.status .nav { padding-left: 7px; }
.status .dims { width: 198px; padding-left: 4px; }
.grip { width: 12px; height: 12px; align-self: flex-end; background: radial-gradient(#777 1px, #0000 1px) 0 0 / 4px 4px; clip-path: polygon(100% 0, 100% 100%, 0 100%); }
</style>
